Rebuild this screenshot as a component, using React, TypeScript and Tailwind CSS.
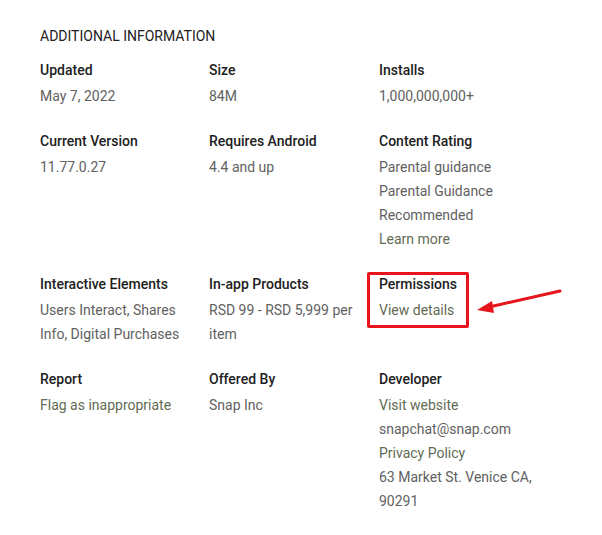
const linkCls = "text-[#5f6b53]";
const valueCls = "text-[#616161]";

type Line = { text: string; link?: boolean };
type Item = { title: string; lines: Line[]; marked?: boolean };

const items: Item[] = [
  { title: "Updated", lines: [{ text: "May 7, 2022" }] },
  { title: "Size", lines: [{ text: "84M" }] },
  { title: "Installs", lines: [{ text: "1,000,000,000+" }] },
  { title: "Current Version", lines: [{ text: "11.77.0.27" }] },
  { title: "Requires Android", lines: [{ text: "4.4 and up" }] },
  {
    title: "Content Rating",
    lines: [
      { text: "Parental guidance" },
      { text: "Parental Guidance Recommended" },
      { text: "Learn more", link: true },
    ],
  },
  { title: "Interactive Elements", lines: [{ text: "Users Interact, Shares Info, Digital Purchases" }] },
  { title: "In-app Products", lines: [{ text: "RSD 99 - RSD 5,999 per item" }] },
  { title: "Permissions", lines: [{ text: "View details", link: true }], marked: true },
  { title: "Report", lines: [{ text: "Flag as inappropriate", link: true }] },
  { title: "Offered By", lines: [{ text: "Snap Inc" }] },
  {
    title: "Developer",
    lines: [
      { text: "Visit website", link: true },
      { text: "snapchat@snap.com" },
      { text: "Privacy Policy", link: true },
      { text: "63 Market St. Venice CA, 90291" },
    ],
  },
];

function InfoCell({ item }: { item: Item }) {
  return (
    <div className="relative pr-[14px]">
      <div className="text-[14px] leading-5 font-medium text-[#212121] mb-[4px]">{item.title}</div>
      {item.lines.map((l, i) => (
        <div key={i} className={`text-[14px] leading-6 ${l.link ? linkCls : valueCls}`}>
          {l.text}
        </div>
      ))}
      {item.marked && (
        <>
          <div className="absolute left-[-12px] top-[-2px] w-[102px] h-[56px] border-[3px] border-[#e8141b] rounded-[2px]" />
          <svg
            className="absolute left-[96px] top-[14px] overflow-visible"
            width="90"
            height="26"
            viewBox="0 0 90 26"
          >
            <line x1="85" y1="3" x2="14" y2="19" stroke="#e8141b" strokeWidth="3" strokeLinecap="round" />
            <polygon points="2,22 17,13 19,25" fill="#e8141b" />
          </svg>
        </>
      )}
    </div>
  );
}

export default function App() {
  return (
    <div className="min-h-screen bg-white px-10 pt-[26px] font-['Roboto',_'Liberation_Sans',_sans-serif]">
      <h2 className="text-[14px] leading-5 font-normal text-[#212121] uppercase mb-[14px]">
        Additional Information
      </h2>
      <div className="grid grid-cols-[169px_170px_170px] gap-y-[23px]">
        {items.map((it) => (
          <InfoCell key={it.title} item={it} />
        ))}
      </div>
    </div>
  );
}
